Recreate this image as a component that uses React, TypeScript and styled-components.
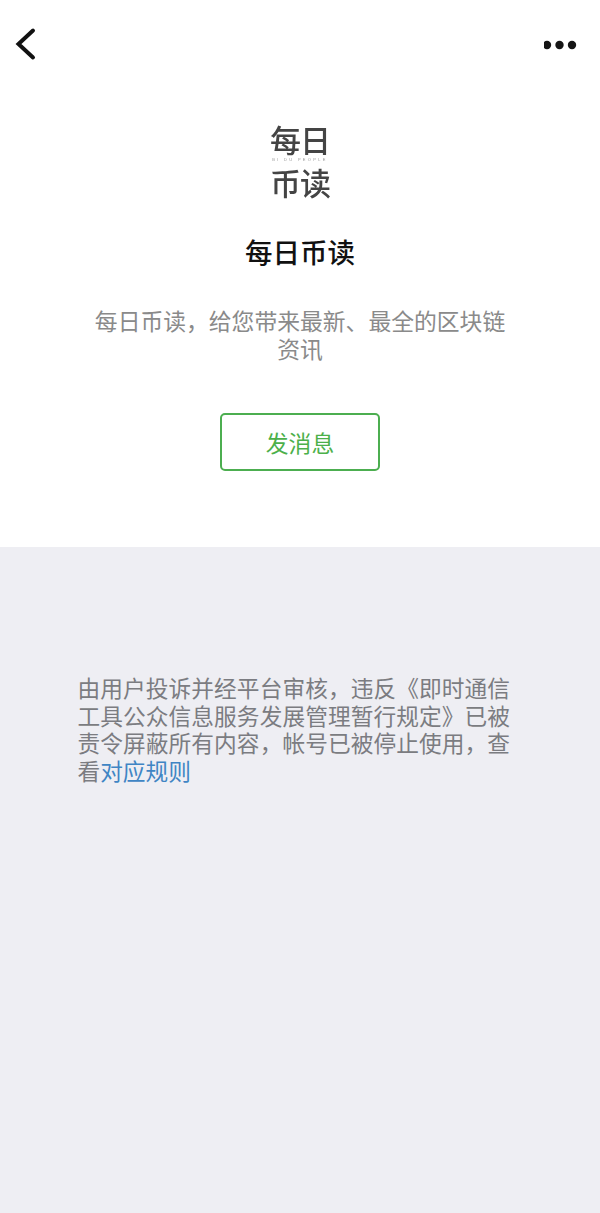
import React from "react";
import styled, { createGlobalStyle } from "styled-components";

const Global = createGlobalStyle`
  html, body { margin: 0; padding: 0; background: #eeeef3; }
  body { font-family: "Noto Sans CJK SC", "Liberation Sans", sans-serif; }
`;

const Page = styled.div`
  width: 600px;
  height: 1213px;
  display: flex;
  flex-direction: column;
  background: #eeeef3;
  overflow: hidden;
`;

const Profile = styled.section`
  height: 547px;
  background: #fff;
  display: flex;
  flex-direction: column;
  align-items: center;
`;

const NavBar = styled.header`
  align-self: stretch;
  height: 88px;
  padding: 0 22px 0 14px;
  display: flex;
  align-items: center;
  justify-content: space-between;
  box-sizing: border-box;
`;

const IconSvg = styled.svg`
  display: block;
`;

const Logo = styled.div`
  margin-top: 32px;
  width: 80px;
  height: 82px;
  display: flex;
  flex-direction: column;
  align-items: center;
  color: #444;
  font-size: 31px;
  line-height: 37px;
  font-weight: 500;
  letter-spacing: -1px;
  filter: blur(0.5px);
`;

const LogoTiny = styled.div`
  font-family: "Liberation Sans", sans-serif;
  font-size: 4px;
  line-height: 6px;
  letter-spacing: 2.3px;
  color: #999;
`;

const Title = styled.h1`
  margin: 29px 0 0;
  font-size: 27.5px;
  line-height: 40px;
  font-weight: 500;
  color: #111;
`;

const Description = styled.p`
  margin: 36px 0 0;
  width: 420px;
  font-size: 22.8px;
  line-height: 28px;
  text-align: center;
  color: #8a8a8a;
`;

const MessageButton = styled.button`
  margin-top: 50px;
  width: 160px;
  height: 58px;
  box-sizing: border-box;
  border: 2px solid #4cae50;
  border-radius: 5px;
  background: #fff;
  color: #4cb04a;
  font-family: inherit;
  font-size: 22.8px;
  padding: 0;
`;

const Notice = styled.section`
  flex: 1;
  padding: 127px 90px 0 77.5px;
`;

const NoticeText = styled.p`
  margin: 0;
  font-size: 22.7px;
  line-height: 27.5px;
  color: #7b7c81;
  text-align: justify;
`;

const RuleLink = styled.a`
  color: #3f85c4;
  text-decoration: none;
`;

export default function App() {
  return (
    <Page>
      <Global />
      <Profile>
        <NavBar>
          <IconSvg width="24" height="36" viewBox="0 0 24 36" fill="none" aria-label="返回">
            <path d="M19 4.5 L4.5 18 L19 31.5" stroke="#111" strokeWidth="4" strokeLinecap="round" strokeLinejoin="miter" />
          </IconSvg>
          <IconSvg width="34" height="12" viewBox="0 0 34 12" aria-label="更多">
            <circle cx="3" cy="7" r="4.2" fill="#151515" />
            <circle cx="15.5" cy="7" r="4.2" fill="#151515" />
            <circle cx="28" cy="7" r="4.2" fill="#151515" />
          </IconSvg>
        </NavBar>
        <Logo>
          <span>每日</span>
          <LogoTiny>BI DU PEOPLE</LogoTiny>
          <span>币读</span>
        </Logo>
        <Title>每日币读</Title>
        <Description>每日币读，给您带来最新、最全的区块链资讯</Description>
        <MessageButton>发消息</MessageButton>
      </Profile>
      <Notice>
        <NoticeText>
          由用户投诉并经平台审核，违反《即时通信工具公众信息服务发展管理暂行规定》已被责令屏蔽所有内容，帐号已被停止使用，查看
          <RuleLink href="#">对应规则</RuleLink>
        </NoticeText>
      </Notice>
    </Page>
  );
}
